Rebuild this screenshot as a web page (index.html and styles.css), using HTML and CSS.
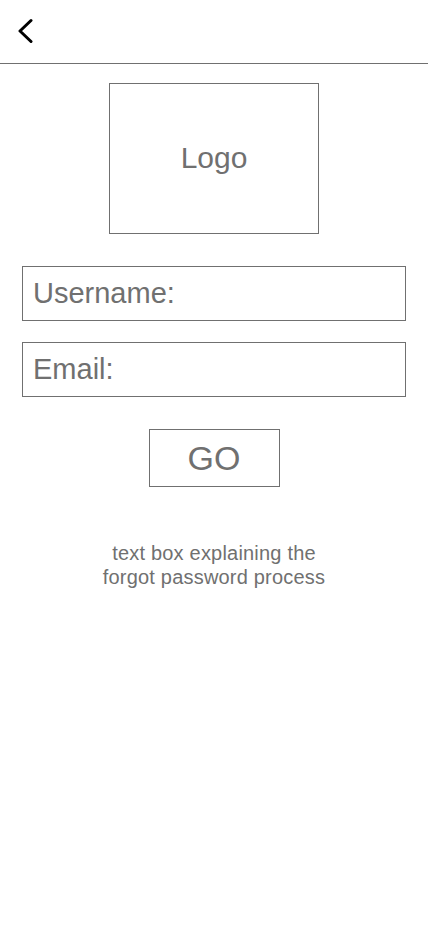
FILE: index.html
```html
<!DOCTYPE html>
<html lang="en">
<head>
    <meta charset="UTF-8">
    <meta name="viewport" content="width=device-width, initial-scale=1.0">
    <title>Forgot Password</title>
    <link rel="stylesheet" href="styles.css">
</head>
<body>
    <header class="top-bar">
        <button class="back-btn" aria-label="Back">
            <svg width="16" height="26" viewBox="0 0 16 26">
                <path d="M14 2.5 L3 13 L14 23.5" fill="none" stroke="#000" stroke-width="3" stroke-linecap="round" stroke-linejoin="round"/>
            </svg>
        </button>
    </header>

    <main class="content">
        <div class="logo-box">Logo</div>

        <form class="reset-form" action="">
            <input type="text" class="field" placeholder="Username:">
            <input type="email" class="field" placeholder="Email:">
            <button type="submit" class="go-btn">GO</button>
        </form>

        <p class="info-text">text box explaining the<br>forgot password process</p>
    </main>
</body>
</html>
```

FILE: styles.css
```css
*{
    margin: 0;
    padding: 0;
    box-sizing: border-box;
    font-family: "Liberation Sans", Arial, Helvetica, sans-serif;
}
body{
    background: #fff;
    color: #707070;
}
.top-bar{
    height: 64px;
    border-bottom: 1px solid #707070;
    padding: 18px 0 0 17px;
}
.back-btn{
    background: none;
    border: none;
    display: block;
    cursor: pointer;
}
.back-btn svg{
    display: block;
}
.content{
    display: flex;
    flex-direction: column;
    align-items: center;
}
.logo-box{
    margin-top: 19px;
    width: 210px;
    height: 151px;
    border: 1px solid #707070;
    display: flex;
    justify-content: center;
    align-items: center;
    font-size: 30px;
    padding-bottom: 2px;
}
.reset-form{
    width: 100%;
    display: flex;
    flex-direction: column;
    align-items: center;
    margin-top: 32px;
}
.field{
    width: 384px;
    height: 55px;
    border: 1px solid #707070;
    border-radius: 0;
    padding: 0 10px;
    font-size: 29px;
    color: #707070;
    outline: none;
    margin-bottom: 21px;
}
.field::placeholder{
    color: #707070;
    opacity: 1;
}
.go-btn{
    margin-top: 11px;
    width: 131px;
    height: 58px;
    border: 1px solid #707070;
    background: #fff;
    color: #707070;
    font-size: 34px;
    cursor: pointer;
}
.info-text{
    margin-top: 54px;
    font-size: 20px;
    letter-spacing: 0.2px;
    line-height: 24px;
    text-align: center;
}
```
